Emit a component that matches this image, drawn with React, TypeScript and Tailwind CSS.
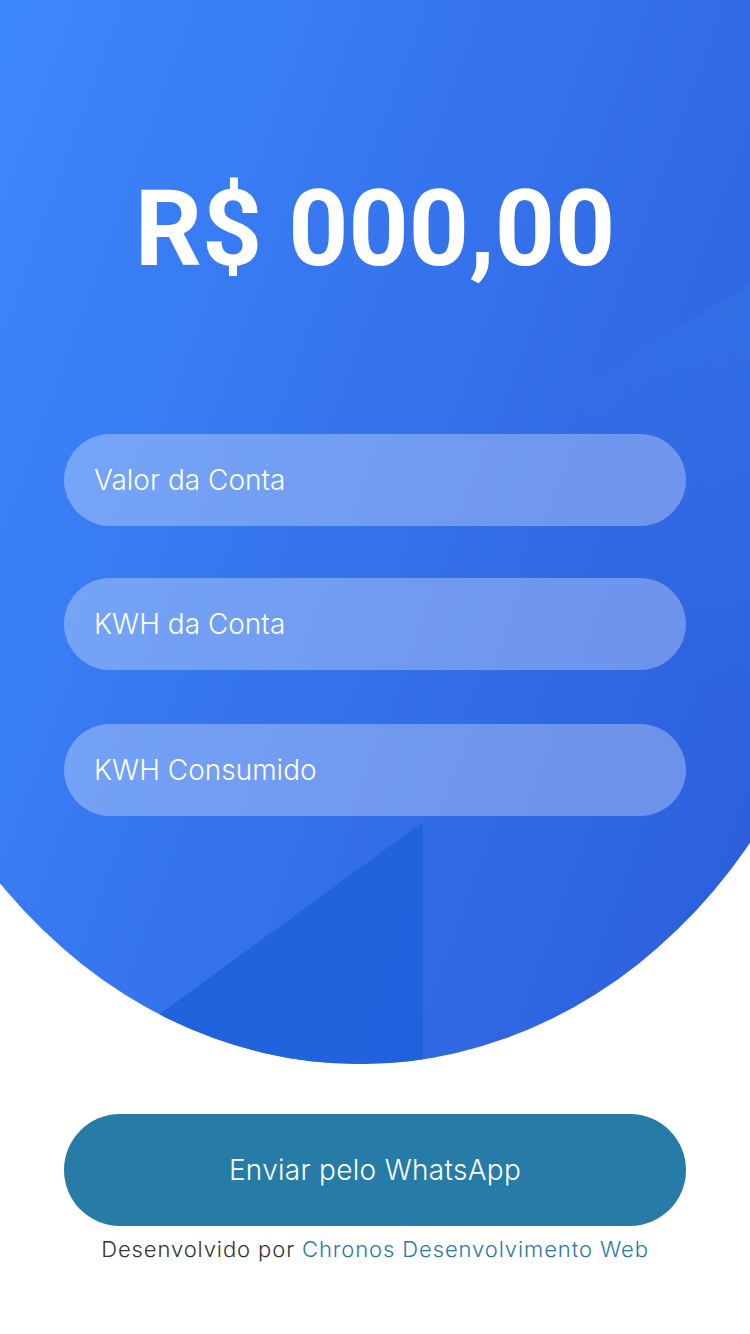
import { useState } from 'react';

const fields = [
  { id: 'valor', placeholder: 'Valor da Conta', gap: 'mt-0' },
  { id: 'kwh', placeholder: 'KWH da Conta', gap: 'mt-[52px]' },
  { id: 'consumo', placeholder: 'KWH Consumido', gap: 'mt-[54px]' },
];

const App = () => {
  const [values, setValues] = useState<Record<string, string>>({});

  return (
    <div className="relative w-full min-h-[1334px] bg-white overflow-hidden font-['Inter',sans-serif]">
      {/* Background blob */}
      <div className="absolute left-[-140px] top-0 w-[1000px] h-[1064px] rounded-b-[500px_591px] overflow-hidden bg-[linear-gradient(110deg,#3d87fc_10%,#2d5fdd_87%)]">
        <svg className="absolute inset-0" width="1000" height="1064" viewBox="0 0 1000 1064">
          <defs>
            <linearGradient id="shine" x1="1" y1="0" x2="0.2" y2="0.8">
              <stop offset="0" stopColor="#3aa0f0" stopOpacity="0.22" />
              <stop offset="0.7" stopColor="#3aa0f0" stopOpacity="0" />
            </linearGradient>
          </defs>
          <polygon points="640,436 1000,218 1000,900 640,900" fill="url(#shine)" />
          <polygon points="563,822 563,1100 182,1100" fill="#1f62db" fillOpacity="0.9" />
        </svg>
      </div>

      {/* Content */}
      <div className="relative flex flex-col items-center">
        <h1 className="pt-[177px] text-[105px] leading-none font-bold text-white font-['Roboto',sans-serif]">
          R$ 000,00
        </h1>

        <div className="mt-[152px] w-[622px] flex flex-col">
          {fields.map((f) => (
            <input
              key={f.id}
              value={values[f.id] ?? ''}
              onChange={(e) => setValues((prev) => ({ ...prev, [f.id]: e.target.value }))}
              placeholder={f.placeholder}
              className={`${f.gap} h-[92px] w-full rounded-full bg-white/30 px-[30px] text-[28px] font-light text-white placeholder:text-white outline-none`}
            />
          ))}
        </div>

        <button className="mt-[298px] h-[112px] w-[622px] rounded-full bg-[#277ba7] text-[28px] font-light tracking-[0.3px] text-white">
          Enviar pelo WhatsApp
        </button>

        <p className="mt-[7px] text-[22px] font-light tracking-[0.9px] text-[#333333]">
          Desenvolvido por <span className="text-[#2779a8]">Chronos Desenvolvimento Web</span>
        </p>
      </div>
    </div>
  );
};

export default App;
